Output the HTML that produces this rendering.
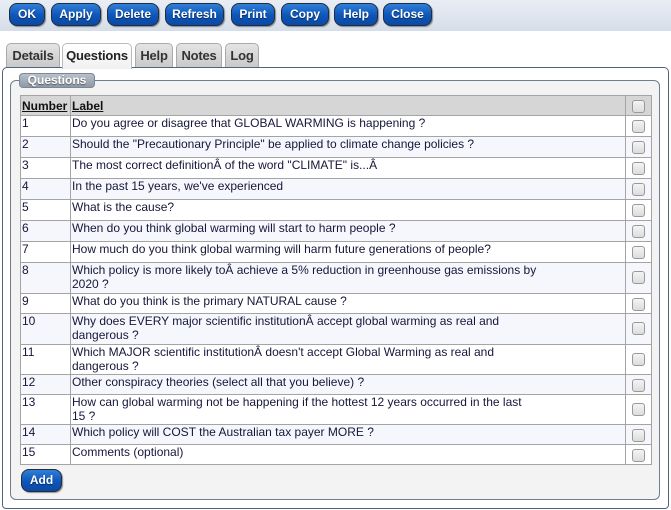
<!DOCTYPE html>
<html><head><style>
*{box-sizing:border-box;margin:0;padding:0}
body{width:671px;height:510px;position:relative;background:#fff;font-family:"Liberation Sans",sans-serif;overflow:hidden}
.tb{position:absolute;left:0;top:0;width:671px;height:31px;background:linear-gradient(#e9eef5,#d5dde8)}
.b{position:absolute;top:3px;height:23px;border:1px solid #222c3a;border-radius:8px;background:linear-gradient(#2f7fd8,#0d55b8 55%,#0a4aa5);color:#fff;font-weight:bold;font-size:12px;text-align:center;line-height:20px;text-shadow:0 1px 1px #0a2a55;box-shadow:1px 1px 1px rgba(0,0,0,.4)}
.tab{position:absolute;top:43px;height:25px;border:1px solid #aaa;border-bottom:none;border-radius:5px 5px 0 0;background:linear-gradient(#e4e4e4,#c8c8c8);font-weight:bold;font-size:13px;color:#333;text-align:center;line-height:24px;letter-spacing:-0.2px}
.tab.a{background:linear-gradient(#fff,#f0f0f0);color:#222;height:26px;z-index:3;border-color:#bbb}
.panel{position:absolute;left:2px;top:67px;width:667px;height:442px;border:1px solid #4f647e;border-radius:5px 5px 4px 4px;background:#fff}
.fs{position:absolute;left:10px;top:80px;width:650px;height:420px;border:1px solid #6e7d90;border-radius:6px;background:#f3f3f3}
.lg{position:absolute;left:19px;top:73px;width:76px;height:15px;border:1px solid #7c8796;border-radius:4px;background:linear-gradient(#b8c0ca,#8e99a6);color:#fff;font-weight:bold;font-size:12px;text-align:center;line-height:13px;text-shadow:0 1px 1px #555}
table{position:absolute;left:20px;top:95px;width:632px;border-collapse:collapse;font-size:12px;color:#16163a}
td{border:1px solid #a4a4a4;vertical-align:top;padding:0 1px 0 1px;line-height:14px;height:21px;background:#fff}
tr:nth-child(odd) td{background:#f6f7fc}
tr.h td{background:#d6d6d6;font-weight:bold;text-decoration:underline;color:#111;height:20px;vertical-align:middle;padding-top:0}
tr.d td{height:31px}
tr.s td{height:20px}
tr.dd td{height:30px}
td.c{width:26px;padding:0}
td.c i{display:block;width:13px;height:13px;border:1px solid #999;border-radius:3px;background:linear-gradient(#f4f4f4,#dcdcdc);margin:4px auto 0}
</style></head><body>
<div class="tb"></div>
<div class="b" style="left:9px;width:36px">OK</div>
<div class="b" style="left:51px;width:50px">Apply</div>
<div class="b" style="left:107px;width:52px">Delete</div>
<div class="b" style="left:165px;width:59px">Refresh</div>
<div class="b" style="left:231px;width:44px">Print</div>
<div class="b" style="left:281px;width:48px">Copy</div>
<div class="b" style="left:334px;width:44px">Help</div>
<div class="b" style="left:383px;width:49px">Close</div>
<div class="tab" style="left:6px;width:54px">Details</div>
<div class="tab a" style="left:62px;width:70px">Questions</div>
<div class="tab" style="left:135px;width:38px">Help</div>
<div class="tab" style="left:176px;width:46px">Notes</div>
<div class="tab" style="left:225px;width:34px">Log</div>
<div class="panel"></div>
<div class="fs"></div>
<div class="lg">Questions</div>
<table>
<tr class="h"><td style="width:50px">Number</td><td>Label</td><td class="c"><i style="margin-top:1px"></i></td></tr>
<tr><td>1</td><td>Do you agree or disagree that GLOBAL WARMING is happening ?</td><td class="c"><i></i></td></tr>
<tr><td>2</td><td>Should the "Precautionary Principle" be applied to climate change policies ?</td><td class="c"><i></i></td></tr>
<tr><td>3</td><td>The most correct definitionÂ of the word "CLIMATE" is...Â</td><td class="c"><i></i></td></tr>
<tr><td>4</td><td>In the past 15 years, we've experienced</td><td class="c"><i></i></td></tr>
<tr><td>5</td><td>What is the cause?</td><td class="c"><i></i></td></tr>
<tr><td>6</td><td>When do you think global warming will start to harm people ?</td><td class="c"><i></i></td></tr>
<tr><td>7</td><td>How much do you think global warming will harm future generations of people?</td><td class="c"><i></i></td></tr>
<tr class="d"><td>8</td><td>Which policy is more likely toÂ achieve a 5% reduction in greenhouse gas emissions by<br>2020 ?</td><td class="c"><i style="margin-top:8px"></i></td></tr>
<tr class="s"><td>9</td><td>What do you think is the primary NATURAL cause ?</td><td class="c"><i></i></td></tr>
<tr class="d"><td>10</td><td>Why does EVERY major scientific institutionÂ accept global warming as real and<br>dangerous ?</td><td class="c"><i style="margin-top:8px"></i></td></tr>
<tr class="dd"><td>11</td><td>Which MAJOR scientific institutionÂ doesn't accept Global Warming as real and<br>dangerous ?</td><td class="c"><i style="margin-top:8px"></i></td></tr>
<tr class="s"><td>12</td><td>Other conspiracy theories (select all that you believe) ?</td><td class="c"><i></i></td></tr>
<tr class="dd"><td>13</td><td>How can global warming not be happening if the hottest 12 years occurred in the last<br>15 ?</td><td class="c"><i style="margin-top:8px"></i></td></tr>
<tr class="s"><td>14</td><td>Which policy will COST the Australian tax payer MORE ?</td><td class="c"><i></i></td></tr>
<tr class="s"><td>15</td><td>Comments (optional)</td><td class="c"><i></i></td></tr>
</table>
<div class="b" style="left:21px;top:469px;width:41px">Add</div>
</body></html>
